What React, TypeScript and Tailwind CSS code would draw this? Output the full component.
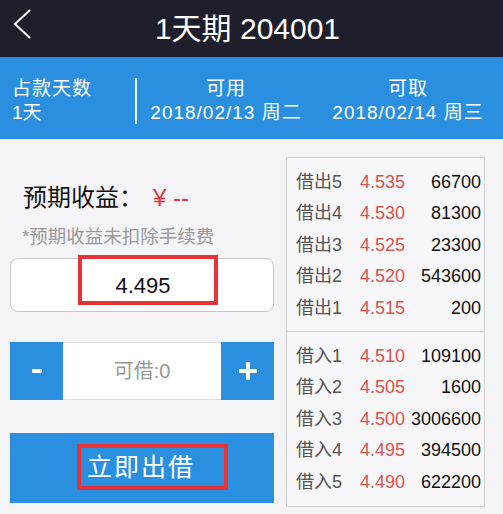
const font = { fontFamily: '"Liberation Sans", "Noto Sans CJK SC", sans-serif' };

const sells = [
  { label: '借出5', price: '4.535', vol: '66700' },
  { label: '借出4', price: '4.530', vol: '81300' },
  { label: '借出3', price: '4.525', vol: '23300' },
  { label: '借出2', price: '4.520', vol: '543600' },
  { label: '借出1', price: '4.515', vol: '200' },
];

const buys = [
  { label: '借入1', price: '4.510', vol: '109100' },
  { label: '借入2', price: '4.505', vol: '1600' },
  { label: '借入3', price: '4.500', vol: '3006600' },
  { label: '借入4', price: '4.495', vol: '394500' },
  { label: '借入5', price: '4.490', vol: '622200' },
];

function BookRow({ label, price, vol }: { label: string; price: string; vol: string }) {
  return (
    <div className="flex items-center h-[31.5px] text-[18px] leading-none">
      <span className="w-[64px] pl-[9px] text-[#555]">{label}</span>
      <span className="w-[60px] pl-[9px] text-[#d9534f]">{price}</span>
      <span className="flex-1 text-right pr-[3px] text-[#111] whitespace-nowrap">{vol}</span>
    </div>
  );
}

export default function App() {
  return (
    <div className="w-[503px] h-[514px] overflow-hidden bg-[#f4f4f6]" style={font}>
      {/* Header */}
      <div className="relative h-[57px] bg-[#1f1e2b] flex items-center justify-center">
        <svg className="absolute left-0 top-0" width="40" height="48" viewBox="0 0 40 48">
          <polyline points="30,10 15,24 30,38" fill="none" stroke="white" strokeWidth="2" strokeLinejoin="miter" />
        </svg>
        <h1 className="text-white text-[30px] leading-none ml-[-8px]">1天期 204001</h1>
      </div>

      {/* Info strip */}
      <div className="h-[82px] bg-[#2b8fe0] flex items-center text-white text-[19px] leading-[24px] pt-[6px]">
        <div className="w-[135px] pl-[12px]">
          <div className="tracking-[1px]">占款天数</div>
          <div>1天</div>
        </div>
        <div className="w-[2px] h-[46px] bg-white/90" />
        <div className="w-[178px] text-center tracking-[1px]">
          <div>可用</div>
          <div>2018/02/13 周二</div>
        </div>
        <div className="w-[186px] text-center tracking-[1px]">
          <div>可取</div>
          <div>2018/02/14 周三</div>
        </div>
      </div>

      {/* Body */}
      <div className="flex pt-[18px] pl-[10px]">
        <div className="w-[264px] flex flex-col">
          <div className="mt-[26px] ml-[13px] flex items-center text-[24px] leading-[30px] text-[#111]">
            <span>预期收益：</span>
            <span className="ml-[10px] text-[#e0383d]">¥ --</span>
          </div>
          <div className="ml-[12px] mt-[13px] text-[18.5px] leading-[22px] text-[#999]">*预期收益未扣除手续费</div>

          <div className="mt-[10px] h-[54px] rounded-[8px] border border-[#c8c8c8] bg-white relative flex items-center justify-center">
            <div className="absolute left-[67px] top-[-4px] w-[140px] h-[50px] border-[4px] border-[#e8323a]" />
            <span className="text-[22px] text-[#111] ml-[2px]">4.495</span>
          </div>

          <div className="mt-[30px] h-[58px] flex">
            <div className="w-[53px] bg-[#2b8fe0] flex items-center justify-center">
              <div className="w-[10px] h-[4px] bg-white rounded-[1px]" />
            </div>
            <div className="flex-1 bg-white border-y border-[#ddd] flex items-center justify-center text-[20px] text-[#999]">
              可借:0
            </div>
            <div className="w-[53px] bg-[#2b8fe0] flex items-center justify-center">
              <div className="relative w-[18px] h-[18px]">
                <div className="absolute left-0 top-[7px] w-[18px] h-[4px] bg-white" />
                <div className="absolute left-[7px] top-0 w-[4px] h-[18px] bg-white" />
              </div>
            </div>
          </div>

          <div className="mt-[33px] h-[70px] bg-[#2b8fe0] relative flex items-center justify-center">
            <div className="absolute left-[67px] top-[11px] w-[151px] h-[46px] border-[4px] border-[#e8323a]" />
            <span className="text-white text-[25px] tracking-[2px] ml-[-2px]">立即出借</span>
          </div>
        </div>

        <div className="ml-[12px] w-[199px] h-[350px] border border-[#cfcfcf] bg-[#f7f7f9] flex flex-col">
          <div className="h-[174px] pt-[8px] border-b border-[#cfcfcf]">
            {sells.map((r) => (
              <BookRow key={r.label} {...r} />
            ))}
          </div>
          <div className="pt-[8px]">
            {buys.map((r) => (
              <BookRow key={r.label} {...r} />
            ))}
          </div>
        </div>
      </div>
    </div>
  );
}
